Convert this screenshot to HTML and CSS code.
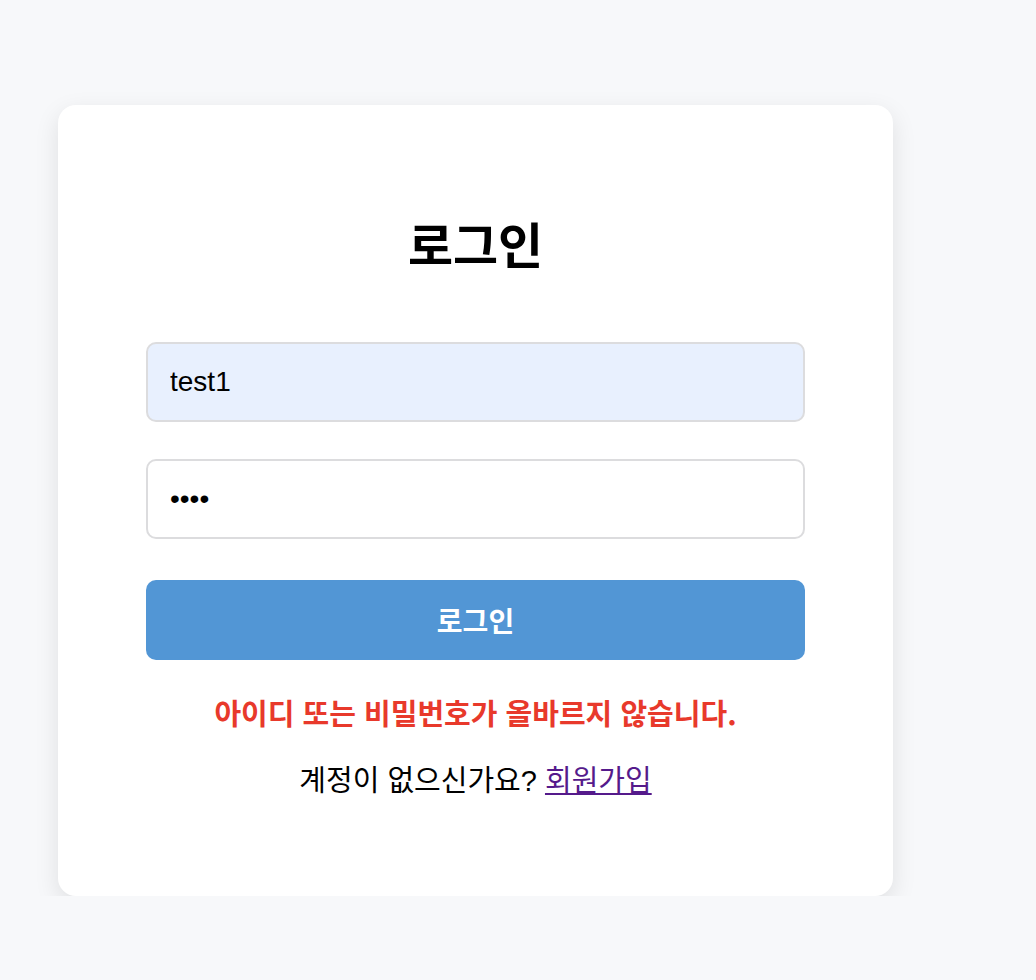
FILE: index.html
```html
<!DOCTYPE html>
<html lang="ko">
<head>
<meta charset="utf-8">
<link rel="stylesheet" href="styles.css">
</head>
<body>
<div class="page">
  <div class="card">
    <h2 class="title">로그인</h2>
    <form class="form">
      <input class="field field-filled" type="text" value="test1">
      <input class="field" type="password" value="abcd">
      <button class="btn" type="button">로그인</button>
    </form>
    <p class="error">아이디 또는 비밀번호가 올바르지 않습니다.</p>
    <p class="signup">계정이 없으신가요? <a href="#" class="link">회원가입</a></p>
  </div>
</div>
</body>
</html>
```

FILE: styles.css
```css
html, body {
  margin: 0;
  padding: 0;
  background: #f7f8fa;
  font-family: "Liberation Sans", "Noto Sans CJK KR", sans-serif;
}
.page {
  padding: 105px 0 0 58px;
}
.card {
  width: 835px;
  box-sizing: border-box;
  background: #ffffff;
  border-radius: 18px;
  box-shadow: 0 8px 24px rgba(0, 0, 0, 0.1);
  padding: 108px 88px 95px;
  display: flex;
  flex-direction: column;
  align-items: stretch;
}
.title {
  margin: 0;
  text-align: center;
  font-family: "Noto Sans CJK KR", sans-serif;
  font-size: 49px;
  line-height: 60px;
  font-weight: 700;
  color: #000;
}
.form {
  margin-top: 69px;
  display: flex;
  flex-direction: column;
}
.field {
  height: 80px;
  box-sizing: border-box;
  border: 2px solid #dcdcde;
  border-radius: 10px;
  padding: 0 22px;
  font-family: "Liberation Sans", sans-serif;
  font-size: 28px;
  color: #000;
  background: #fff;
  outline: none;
  margin: 0 0 37px;
}
.field-filled {
  background: #e8f0fe;
}
.btn {
  margin-top: 4px;
  height: 80px;
  border: none;
  border-radius: 10px;
  background: #5296d5;
  color: #fff;
  font-family: "Noto Sans CJK KR", sans-serif;
  font-size: 28px;
  font-weight: 700;
}
.error {
  margin: 32px 0 0;
  text-align: center;
  color: #e8392b;
  font-family: "Noto Sans CJK KR", sans-serif;
  font-size: 29px;
  line-height: 40px;
  font-weight: 700;
}
.signup {
  margin: 29px 0 0;
  text-align: center;
  color: #000;
  font-family: "Liberation Sans", "Noto Sans CJK KR", sans-serif;
  font-size: 29px;
  line-height: 40px;
}
.link {
  color: #551a8b;
  text-decoration: underline;
}
```
